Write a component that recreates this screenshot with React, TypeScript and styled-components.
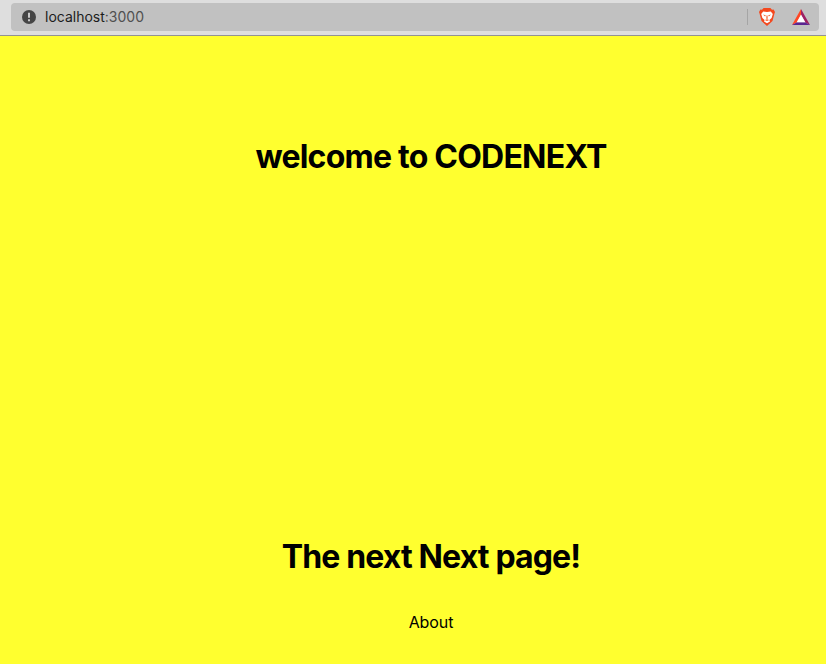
import React from "react";
import styled, { createGlobalStyle } from "styled-components";

const Global = createGlobalStyle`
  * { box-sizing: border-box; }
  body { margin: 0; background: #ffff2f; font-family: Inter, sans-serif; color: #000; }
`;
const Window = styled.div`
  display: flex;
  flex-direction: column;
  height: 664px;
  overflow: hidden;
`;
const Toolbar = styled.header`
  height: 36px;
  flex: none;
  background: #dedede;
  border-bottom: 1px solid #929292;
  padding: 3px 7px 0 11px;
`;
const AddressBar = styled.div`
  height: 28px;
  border-radius: 4px;
  background: #c1c1c1;
  display: flex;
  align-items: center;
  padding: 0 9px 0 11px;
`;
const Url = styled.span`
  flex: 1;
  margin-left: 9px;
  font-size: 14px;
  line-height: 20px;
  letter-spacing: 0;
  color: #505050;
`;
const Host = styled.span`
  color: #1c1c1c;
`;
const Divider = styled.i`
  width: 1px;
  height: 16px;
  background: #a5a5a5;
  margin-right: 10px;
`;
const Icon = styled.svg<{ $gap?: number }>`
  flex: none;
  margin-left: ${p => p.$gap ?? 0}px;
`;
const Page = styled.main`
  flex: 1;
  display: flex;
  flex-direction: column;
  align-items: center;
  padding: 101px 0 0 36px;
`;
const Heading = styled.h1<{ $gap: number; $tracking: number }>`
  margin: 0 0 ${p => p.$gap}px;
  font-size: 32px;
  line-height: 40px;
  font-weight: 700;
  letter-spacing: ${p => p.$tracking}px;
  white-space: nowrap;
`;
const Link = styled.a`
  font-size: 16px;
  line-height: 24px;
  letter-spacing: -0.1px;
`;

const InfoIcon = () => (
  <Icon width="14" height="14" viewBox="0 0 14 14">
    <circle cx="7" cy="7" r="7" fill="#454545" />
    <path d="M7 2.8v5M7 9.2v2" stroke="#c9c9c9" strokeWidth="2" />
  </Icon>
);

const LionIcon = () => (
  <Icon width="18" height="18" viewBox="0 0 18 18">
    <path d="M5.6 0h6.8l1.6 1.7 1.6-.2L17 4l-.6 1.8L14.5 13 9 18l-5.5-5L1.6 5.8 1 4l1.4-2.5 1.6.2z" fill="#f4481e" />
    <path d="M5.2 3.5 9 4l3.8-.5 2 2.6-1.2 4-2.2 1.8.6 1.5L9 15.3l-3-1.9.6-1.5-2.2-1.8-1.2-4z" fill="#fff" />
    <path d="m5 6.6 2.8.7-.7 1.3zM13 6.6l-2.8.7.7 1.3zM8.5 7.5h1l.2 3-.7.7-.7-.7zM6.8 12l2.2-.8 2.2.8-2.2 1z" fill="#f4622e" />
  </Icon>
);

const TriangleIcon = () => (
  <Icon $gap={16} width="18" height="18" viewBox="0 0 18 18">
    <path d="M9 1 0 17l5-2.8L9 7z" fill="#ff4724" />
    <path d="M9 1v6l4 7.2 5 2.8z" fill="#9e1f63" />
    <path d="m0 17 5-2.8h8l5 2.8z" fill="#5b2590" />
    <path d="m9 6.4 4.3 7.8H4.7z" fill="#fff" />
  </Icon>
);

export default function App() {
  return (
    <Window>
      <Global />
      <Toolbar>
        <AddressBar>
          <InfoIcon />
          <Url><Host>localhost</Host>:3000</Url>
          <Divider />
          <LionIcon />
          <TriangleIcon />
        </AddressBar>
      </Toolbar>
      <Page>
        <Heading $gap={360} $tracking={-0.77}>welcome to CODENEXT</Heading>
        <Heading $gap={33} $tracking={-0.86}>The next Next page!</Heading>
        <Link>About</Link>
      </Page>
    </Window>
  );
}
